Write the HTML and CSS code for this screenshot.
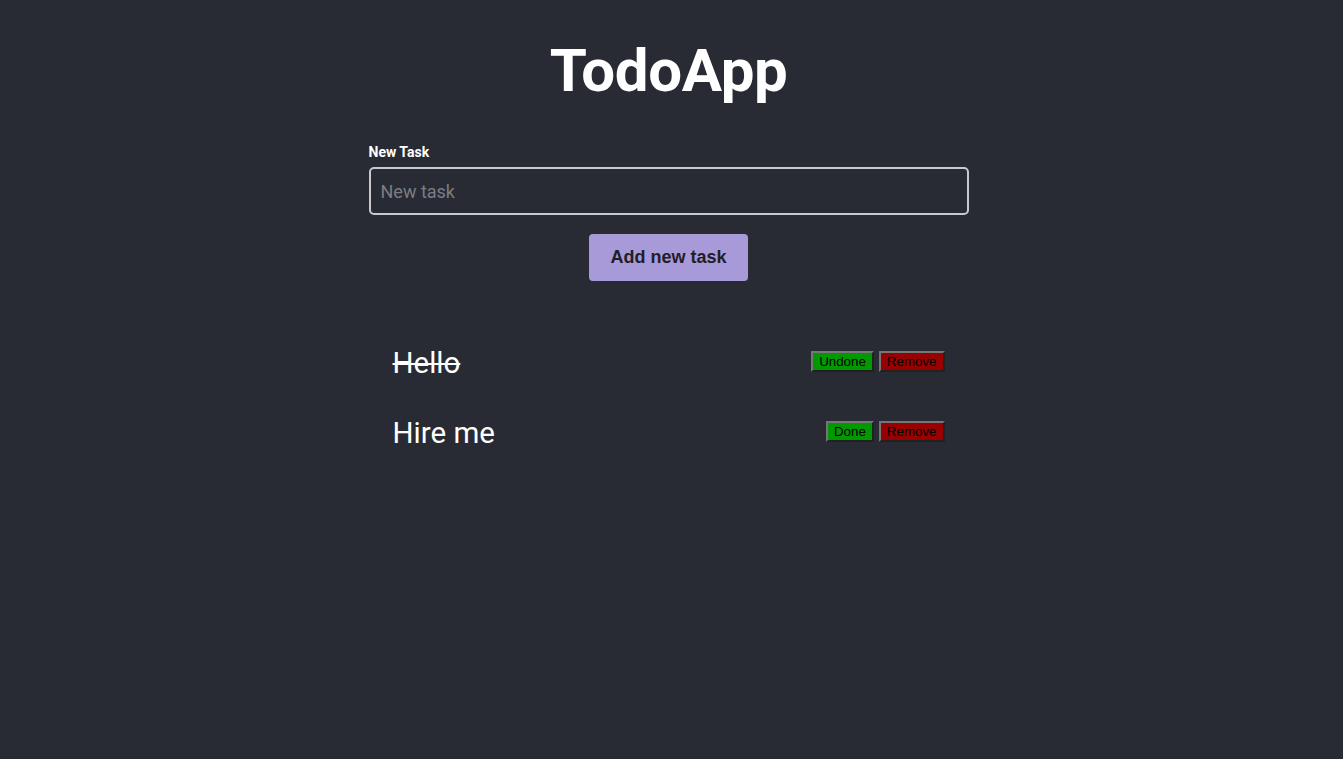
FILE: index.html
```html
<!DOCTYPE html>
<html>
<head>
<meta charset="utf-8">
<link rel="stylesheet" href="styles.css">
</head>
<body>
<div class="app">
  <h1 class="title">TodoApp</h1>
  <form class="form">
    <label class="label" for="task">New Task</label>
    <input class="input" id="task" type="text" placeholder="New task">
    <button class="add" type="button">Add new task</button>
  </form>
  <ul class="list">
    <li class="item">
      <span class="text done">Hello</span>
      <span class="actions"><button class="btn green">Undone</button><button class="btn red">Remove</button></span>
    </li>
    <li class="item">
      <span class="text">Hire me</span>
      <span class="actions"><button class="btn green">Done</button><button class="btn red">Remove</button></span>
    </li>
  </ul>
</div>
</body>
</html>
```
FILE: styles.css
```css
html, body {
  margin: 0;
  padding: 0;
  background: #282b34;
  height: 100%;
}
body {
  font-family: Roboto, "Liberation Sans", sans-serif;
  color: #fff;
}
.app {
  width: 600px;
  padding-right: 6px;
  margin: 0 auto;
  padding-top: 33px;
}
.title {
  margin: 0;
  text-align: center;
  font-size: 60px;
  font-weight: 700;
  line-height: 76px;
  letter-spacing: -0.4px;
}
.form {
  display: flex;
  flex-direction: column;
  margin-top: 35px;
}
.label {
  font-size: 14px;
  font-weight: 700;
  line-height: 17px;
  margin-bottom: 6px;
}
.input {
  box-sizing: border-box;
  width: 600px;
  height: 48px;
  border: 2px solid #c9c9cc;
  border-radius: 5px;
  background: transparent;
  color: #fff;
  padding: 0 10px;
  font-family: Roboto, sans-serif;
  font-size: 18px;
  outline: none;
}
.input::placeholder {
  color: #7b7d84;
}
.add {
  align-self: center;
  margin-top: 19px;
  width: 159px;
  height: 47px;
  border: none;
  border-radius: 4px;
  background: #a899d9;
  color: #1e1e28;
  font-family: "Liberation Sans", Arial, sans-serif;
  font-weight: 700;
  font-size: 18px;
  cursor: pointer;
}
.list {
  list-style: none;
  margin: 46px 0 0;
  padding: 0 24px;
}
.item {
  display: flex;
  align-items: center;
  justify-content: space-between;
  height: 70px;
}
.text {
  font-size: 29.5px;
  line-height: 36px;
  margin-top: 1px;
}
.text.done {
  text-decoration: line-through;
}
.actions {
  display: flex;
  gap: 5px;
  margin-top: -2px;
}
.btn {
  font-family: "Liberation Sans", Arial, sans-serif;
  font-size: 13.333px;
  line-height: 15px;
  padding: 1px 6px;
  border: 2px outset #767676;
  color: #000;
  cursor: pointer;
}
.green { background: #009900; }
.red { background: #990000; }
```
